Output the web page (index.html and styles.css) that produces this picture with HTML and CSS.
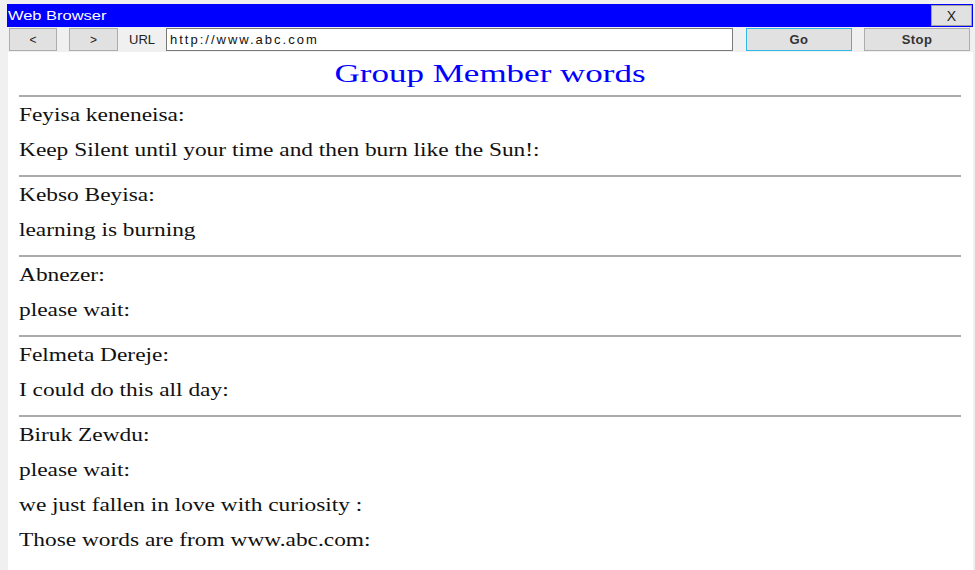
FILE: index.html
```html
<!DOCTYPE html>
<html>
<head>
<meta charset="utf-8">
<title>Web Browser</title>
<link rel="stylesheet" href="styles.css">
</head>
<body>
<div class="window">
  <div class="titlebar">
    <span class="title-text">Web Browser</span>
    <button class="close">X</button>
  </div>
  <div class="toolbar">
    <button class="btn nav back">&lt;</button>
    <button class="btn nav fwd">&gt;</button>
    <span class="url-label">URL</span>
    <input class="url" type="text" value="http://www.abc.com">
    <button class="btn action go">Go</button>
    <button class="btn action stop">Stop</button>
  </div>
  <main class="content">
    <h1 class="page-title"><span class="wide-title">Group Member words</span></h1>
    <section class="entry">
      <p class="line">Feyisa keneneisa:</p>
      <p class="line">Keep Silent until your time and then burn like the Sun!:</p>
    </section>
    <section class="entry">
      <p class="line">Kebso Beyisa:</p>
      <p class="line">learning is burning</p>
    </section>
    <section class="entry">
      <p class="line">Abnezer:</p>
      <p class="line">please wait:</p>
    </section>
    <section class="entry">
      <p class="line">Felmeta Dereje:</p>
      <p class="line">I could do this all day:</p>
    </section>
    <section class="entry">
      <p class="line">Biruk Zewdu:</p>
      <p class="line">please wait:</p>
      <p class="line">we just fallen in love with curiosity :</p>
      <p class="line">Those words are from www.abc.com:</p>
    </section>
  </main>
</div>
</body>
</html>
```
FILE: styles.css
```css
html, body {
  margin: 0;
  padding: 0;
}
body {
  width: 975px;
  height: 570px;
  overflow: hidden;
  background: #f0f0f0;
  font-family: "Liberation Sans", Arial, sans-serif;
}
.window {
  padding-top: 4px;
}
.titlebar {
  margin-left: 7px;
  width: 966px;
  height: 23px;
  box-sizing: border-box;
  padding: 0 1px;
  background: #0000ff;
  display: flex;
  align-items: center;
  justify-content: space-between;
}
.title-text {
  color: #ffffff;
  font-size: 12px;
  display: inline-block;
  transform: scaleX(1.37);
  transform-origin: left center;
}
.close {
  width: 41px;
  height: 21px;
  box-sizing: border-box;
  border: 1px solid #a0a0a0;
  background: #e1e1e1;
  font-family: "Liberation Sans", Arial, sans-serif;
  font-size: 14px;
  color: #222;
  padding: 0;
  margin: 0;
}
.toolbar {
  margin-top: 1px;
  height: 23px;
  padding-left: 9px;
  display: flex;
  align-items: center;
  gap: 12px;
}
.btn {
  height: 23px;
  box-sizing: border-box;
  border: 1px solid #adadad;
  background: #e1e1e1;
  font-family: "Liberation Sans", Arial, sans-serif;
  color: #222;
  padding: 0;
  margin: 0;
}
.nav {
  font-size: 12px;
}
.back {
  width: 48px;
}
.fwd {
  width: 49px;
}
.url-label {
  width: 25px;
  font-size: 13px;
  color: #222;
  margin-left: -1px;
}
.url {
  width: 567px;
  height: 23px;
  box-sizing: border-box;
  margin: 0;
  border: 1px solid #7a7a7a;
  background: #ffffff;
  padding: 0 3px;
  font-family: "Liberation Sans", Arial, sans-serif;
  font-size: 13px;
  letter-spacing: 2px;
  color: #111;
}
.action {
  font-size: 13px;
  font-weight: bold;
  letter-spacing: 0.4px;
  color: #333;
}
.go {
  width: 106px;
  margin-left: 1px;
  border-color: #35b7e6;
}
.stop {
  width: 106px;
}
.content {
  margin-top: 1px;
  margin-left: 8px;
  width: 965px;
  height: 518px;
  box-sizing: border-box;
  padding: 0 12px 0 11px;
  background: #ffffff;
  font-family: "Liberation Serif", "Times New Roman", serif;
}
.page-title {
  margin: 0;
  height: 43px;
  line-height: 43px;
  text-align: center;
  font-size: 25px;
  font-weight: normal;
  color: #0000ff;
}
.wide-title {
  display: inline-block;
  transform: scaleX(1.4);
  transform-origin: center center;
}
.entry {
  border-top: 2px solid #ababab;
  padding-bottom: 8px;
}
.line {
  margin: 0;
  width: max-content;
  line-height: 35px;
  font-size: 19px;
  color: #111111;
  transform: scaleX(1.23);
  transform-origin: left center;
}
```
